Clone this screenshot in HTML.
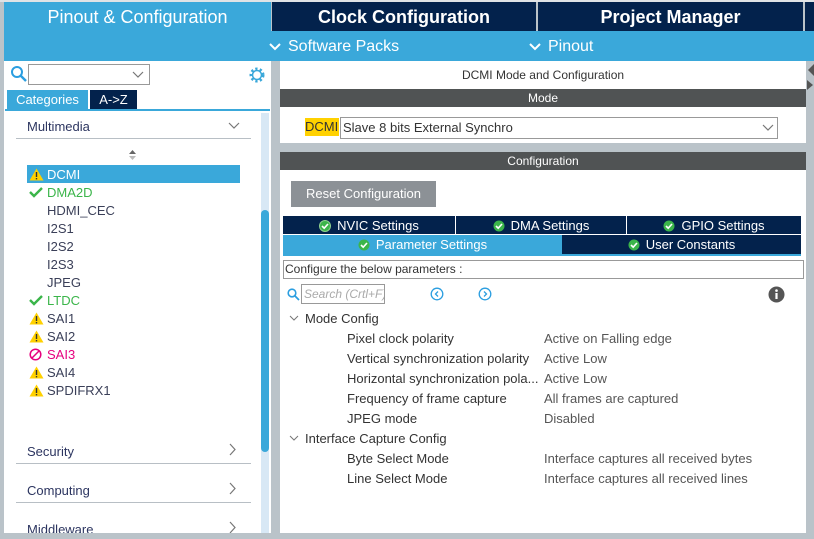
<!DOCTYPE html>
<html><head><meta charset="utf-8"><style>
*{margin:0;padding:0;box-sizing:border-box}
body{width:814px;height:539px;overflow:hidden;background:#bac3c9;font-family:"Liberation Sans",sans-serif;position:relative}
.a{position:absolute}
.t{color:#fff;text-align:center;white-space:nowrap}
.list div{position:absolute;left:47px;font-size:13px;color:#3a3f58}
.ic{position:absolute;left:-18px;top:1px}
.row{position:absolute;font-size:13px;color:#333;white-space:nowrap}
.v{position:absolute;left:544px;font-size:13px;color:#555;white-space:nowrap}
.ck{display:inline-block;vertical-align:-2px;margin-right:6px}
</style></head><body>
<div class="a" style="left:0;top:0;width:814px;height:2px;background:#dfe3e6"></div>
<div class="a t" style="left:4px;top:2px;width:267px;height:29px;background:#3aa8da;font-size:18px;line-height:31px">Pinout &amp; Configuration</div>
<div class="a t" style="left:272px;top:2px;width:264px;height:29px;background:#03224c;font-size:18px;line-height:31px;font-weight:bold">Clock Configuration</div>
<div class="a t" style="left:538px;top:2px;width:265px;height:29px;background:#03224c;font-size:18px;line-height:31px;font-weight:bold">Project Manager</div>
<div class="a" style="left:805px;top:2px;width:9px;height:29px;background:#03224c"></div>
<div class="a" style="left:4px;top:31px;width:810px;height:30px;background:#3aa8da"></div>
<svg class="a" style="left:268px;top:42px" width="14" height="10"><path d="M2 2 L7 7 L12 2" fill="none" stroke="#fff" stroke-width="2"/></svg>
<div class="a" style="left:288px;top:38px;color:#fff;font-size:16px">Software Packs</div>
<svg class="a" style="left:528px;top:42px" width="14" height="10"><path d="M2 2 L7 7 L12 2" fill="none" stroke="#fff" stroke-width="2"/></svg>
<div class="a" style="left:548px;top:38px;color:#fff;font-size:16px">Pinout</div>
<!-- left panel -->
<div class="a" style="left:4px;top:61px;width:267px;height:478px;background:#fff"></div>
<svg class="a" style="left:10px;top:65px" width="18" height="18"><circle cx="7" cy="7" r="5" fill="none" stroke="#2b9ee0" stroke-width="2"/><line x1="11" y1="11" x2="16" y2="16" stroke="#2b9ee0" stroke-width="2.4"/></svg>
<div class="a" style="left:28px;top:64px;width:122px;height:21px;border:1px solid #999;background:#fff"></div>
<svg class="a" style="left:132px;top:71px" width="12" height="8"><path d="M1 1 L6 6 L11 1" fill="none" stroke="#777" stroke-width="1.2"/></svg>
<svg class="a" style="left:248px;top:66px" width="18" height="18" viewBox="0 0 18 18"><circle cx="9" cy="9" r="6" fill="none" stroke="#3aa8da" stroke-width="3" stroke-dasharray="2.2 2.2"/><circle cx="9" cy="9" r="4.5" fill="none" stroke="#3aa8da" stroke-width="1.5"/></svg>
<div class="a t" style="left:7px;top:90px;width:81px;height:19px;background:#3aa8da;font-size:13px;line-height:19px">Categories</div>
<div class="a t" style="left:90px;top:90px;width:47px;height:19px;background:#03224c;font-size:13px;line-height:19px">A-&gt;Z</div>
<div class="a" style="left:5px;top:109px;width:265px;height:2px;background:#3aa8da"></div>
<div class="a" style="left:261px;top:113px;width:8px;height:420px;background:#d8e8f5"></div>
<div class="a" style="left:261px;top:210px;width:8px;height:242px;background:#3aa8da;border-radius:4px"></div>
<div class="a" style="left:27px;top:119px;font-size:13px;color:#2c3560">Multimedia</div>
<svg class="a" style="left:228px;top:122px" width="12" height="8"><path d="M1 1 L6 6 L11 1" fill="none" stroke="#777" stroke-width="1.2"/></svg>
<div class="a" style="left:16px;top:138px;width:235px;height:1px;background:#b8bfc5"></div>
<svg class="a" style="left:128px;top:150px" width="9" height="10"><path d="M1 4 L4.5 0 L8 4Z" fill="#666"/><path d="M1 6 L4.5 10 L8 6Z" fill="#bbb"/></svg>
<div class="a" style="left:27px;top:165px;width:213px;height:18px;background:#3aa8da"></div>
<div class="list">
<div style="top:167px;color:#fff"><svg class="ic" width="15" height="13"><path d="M7.5 0.5 L14.5 12.5 L0.5 12.5Z" fill="#ffd100"/><rect x="6.8" y="4" width="1.4" height="5" fill="#333"/><rect x="6.8" y="10" width="1.4" height="1.4" fill="#333"/></svg>DCMI</div>
<div style="top:185px;color:#3bb54a"><svg class="ic" width="14" height="12"><path d="M1 6 L5 10 L13 2" fill="none" stroke="#3bb54a" stroke-width="2.4"/></svg>DMA2D</div>
<div style="top:203px">HDMI_CEC</div>
<div style="top:221px">I2S1</div>
<div style="top:239px">I2S2</div>
<div style="top:257px">I2S3</div>
<div style="top:275px">JPEG</div>
<div style="top:293px;color:#3bb54a"><svg class="ic" width="14" height="12"><path d="M1 6 L5 10 L13 2" fill="none" stroke="#3bb54a" stroke-width="2.4"/></svg>LTDC</div>
<div style="top:311px"><svg class="ic" width="15" height="13"><path d="M7.5 0.5 L14.5 12.5 L0.5 12.5Z" fill="#ffd100"/><rect x="6.8" y="4" width="1.4" height="5" fill="#333"/><rect x="6.8" y="10" width="1.4" height="1.4" fill="#333"/></svg>SAI1</div>
<div style="top:329px"><svg class="ic" width="15" height="13"><path d="M7.5 0.5 L14.5 12.5 L0.5 12.5Z" fill="#ffd100"/><rect x="6.8" y="4" width="1.4" height="5" fill="#333"/><rect x="6.8" y="10" width="1.4" height="1.4" fill="#333"/></svg>SAI2</div>
<div style="top:347px;color:#e6007e"><svg class="ic" width="14" height="14"><circle cx="6.5" cy="6.5" r="5.3" fill="none" stroke="#e6007e" stroke-width="1.5"/><line x1="3" y1="10" x2="10" y2="3" stroke="#e6007e" stroke-width="1.5"/></svg>SAI3</div>
<div style="top:365px"><svg class="ic" width="15" height="13"><path d="M7.5 0.5 L14.5 12.5 L0.5 12.5Z" fill="#ffd100"/><rect x="6.8" y="4" width="1.4" height="5" fill="#333"/><rect x="6.8" y="10" width="1.4" height="1.4" fill="#333"/></svg>SAI4</div>
<div style="top:383px"><svg class="ic" width="15" height="13"><path d="M7.5 0.5 L14.5 12.5 L0.5 12.5Z" fill="#ffd100"/><rect x="6.8" y="4" width="1.4" height="5" fill="#333"/><rect x="6.8" y="10" width="1.4" height="1.4" fill="#333"/></svg>SPDIFRX1</div>
</div>
<div class="a" style="left:27px;top:444px;font-size:13px;color:#2c3560">Security</div>
<div class="a" style="left:27px;top:483px;font-size:13px;color:#2c3560">Computing</div>
<div class="a" style="left:27px;top:522px;font-size:13px;color:#2c3560">Middleware</div>
<svg class="a" style="left:229px;top:443px" width="8" height="13"><path d="M1 1 L6 6.5 L1 12" fill="none" stroke="#777" stroke-width="1.2"/></svg>
<svg class="a" style="left:229px;top:482px" width="8" height="13"><path d="M1 1 L6 6.5 L1 12" fill="none" stroke="#777" stroke-width="1.2"/></svg>
<svg class="a" style="left:229px;top:521px" width="8" height="13"><path d="M1 1 L6 6.5 L1 12" fill="none" stroke="#777" stroke-width="1.2"/></svg>
<div class="a" style="left:16px;top:463px;width:235px;height:1px;background:#b8bfc5"></div>
<div class="a" style="left:16px;top:502px;width:235px;height:1px;background:#b8bfc5"></div>
<div class="a" style="left:0;top:533px;width:272px;height:6px;background:#bac3c9"></div>
<!-- right panel -->
<div class="a" style="left:280px;top:61px;width:526px;height:472px;background:#fff"></div>
<div class="a" style="left:280px;top:143px;width:526px;height:9px;background:#bac3c9"></div>
<svg class="a" style="left:806px;top:62px" width="8" height="30"><path d="M8 2 L2 8 L8 14Z" fill="#555"/><path d="M1 18 L7 23 L1 28Z" fill="#555"/></svg>
<div class="a" style="left:280px;top:68px;width:526px;text-align:center;font-size:12px;color:#333">DCMI Mode and Configuration</div>
<div class="a t" style="left:280px;top:89px;width:526px;height:18px;background:#505354;font-size:12px;line-height:18px">Mode</div>
<div class="a" style="left:305px;top:118px;width:34px;height:18px;background:#ffd100;font-size:13px;line-height:18px;color:#333">DCMI</div>
<div class="a" style="left:340px;top:117px;width:438px;height:22px;border:1px solid #999;font-size:13px;line-height:20px;padding-left:2px;color:#333">Slave 8 bits External Synchro</div>
<svg class="a" style="left:762px;top:124px" width="12" height="8"><path d="M1 1 L6 6 L11 1" fill="none" stroke="#777" stroke-width="1.2"/></svg>
<div class="a t" style="left:280px;top:152px;width:526px;height:18px;background:#505354;font-size:12px;line-height:18px">Configuration</div>
<div class="a t" style="left:291px;top:181px;width:145px;height:26px;background:#8c9196;font-size:13px;line-height:26px">Reset Configuration</div>
<div class="a" style="left:283px;top:216px;width:518px;height:40px;background:#03224c"></div>
<div class="a" style="left:455px;top:216px;width:1px;height:18px;background:#fff"></div>
<div class="a" style="left:626px;top:216px;width:1px;height:18px;background:#fff"></div>
<div class="a" style="left:283px;top:234px;width:518px;height:1px;background:#fff"></div>
<div class="a" style="left:283px;top:235px;width:279px;height:20px;background:#3aa8da"></div>
<div class="a" style="left:283px;top:254px;width:518px;height:2px;background:#3aa8da"></div>
<div class="a t" style="left:283px;top:216px;width:172px;height:18px;font-size:13px;line-height:19px"><svg class="ck" width="12" height="12"><circle cx="6" cy="6" r="6" fill="#8fd18f"/><circle cx="6" cy="6" r="5" fill="#3bb54a"/><path d="M3 6 L5.2 8.2 L9 4" fill="none" stroke="#fff" stroke-width="1.6"/></svg>NVIC Settings</div>
<div class="a t" style="left:456px;top:216px;width:170px;height:18px;font-size:13px;line-height:19px"><svg class="ck" width="12" height="12"><circle cx="6" cy="6" r="5.5" fill="#3bb54a"/><path d="M3 6 L5.2 8.2 L9 4" fill="none" stroke="#fff" stroke-width="1.6"/></svg>DMA Settings</div>
<div class="a t" style="left:627px;top:216px;width:174px;height:18px;font-size:13px;line-height:19px"><svg class="ck" width="12" height="12"><circle cx="6" cy="6" r="5.5" fill="#3bb54a"/><path d="M3 6 L5.2 8.2 L9 4" fill="none" stroke="#fff" stroke-width="1.6"/></svg>GPIO Settings</div>
<div class="a t" style="left:283px;top:235px;width:279px;height:19px;font-size:13px;line-height:19px"><svg class="ck" width="12" height="12"><circle cx="6" cy="6" r="5.5" fill="#3bb54a"/><path d="M3 6 L5.2 8.2 L9 4" fill="none" stroke="#fff" stroke-width="1.6"/></svg>Parameter Settings</div>
<div class="a t" style="left:562px;top:235px;width:239px;height:19px;font-size:13px;line-height:19px"><svg class="ck" width="12" height="12"><circle cx="6" cy="6" r="5.5" fill="#3bb54a"/><path d="M3 6 L5.2 8.2 L9 4" fill="none" stroke="#fff" stroke-width="1.6"/></svg>User Constants</div>
<div class="a" style="left:283px;top:260px;width:521px;height:19px;border:1px solid #999;font-size:12px;line-height:17px;color:#333;padding-left:1px">Configure the below parameters :</div>
<svg class="a" style="left:287px;top:288px" width="13" height="13"><circle cx="5" cy="5" r="3.8" fill="none" stroke="#2b9ee0" stroke-width="1.6"/><line x1="8" y1="8" x2="12" y2="12" stroke="#2b9ee0" stroke-width="1.8"/></svg>
<div class="a" style="left:301px;top:284px;width:84px;height:20px;border:1px solid #999;font-size:12px;line-height:18px;color:#aaa;font-style:italic;padding-left:2px;white-space:nowrap;overflow:hidden">Search (Crtl+F)</div>
<svg class="a" style="left:430px;top:287px" width="14" height="14"><circle cx="7" cy="7" r="5.8" fill="none" stroke="#2b9ee0" stroke-width="1.3"/><path d="M8 4.5 L5.5 7 L8 9.5" fill="none" stroke="#2b9ee0" stroke-width="1.3"/></svg>
<svg class="a" style="left:478px;top:287px" width="14" height="14"><circle cx="7" cy="7" r="5.8" fill="none" stroke="#2b9ee0" stroke-width="1.3"/><path d="M6 4.5 L8.5 7 L6 9.5" fill="none" stroke="#2b9ee0" stroke-width="1.3"/></svg>
<svg class="a" style="left:768px;top:286px" width="17" height="17"><circle cx="8.5" cy="8.5" r="8" fill="#555"/><rect x="7.4" y="7" width="2.2" height="6" fill="#fff"/><circle cx="8.5" cy="4.6" r="1.3" fill="#fff"/></svg>
<svg class="a" style="left:289px;top:315px" width="10" height="7"><path d="M1 1 L5 5 L9 1" fill="none" stroke="#777" stroke-width="1"/></svg>
<svg class="a" style="left:289px;top:435px" width="10" height="7"><path d="M1 1 L5 5 L9 1" fill="none" stroke="#777" stroke-width="1"/></svg>
<div class="row" style="left:305px;top:311px">Mode Config</div>
<div class="row" style="left:347px;top:331px">Pixel clock polarity</div><div class="v" style="top:331px">Active on Falling edge</div>
<div class="row" style="left:347px;top:351px">Vertical synchronization polarity</div><div class="v" style="top:351px">Active Low</div>
<div class="row" style="left:347px;top:371px">Horizontal synchronization pola...</div><div class="v" style="top:371px">Active Low</div>
<div class="row" style="left:347px;top:391px">Frequency of frame capture</div><div class="v" style="top:391px">All frames are captured</div>
<div class="row" style="left:347px;top:411px">JPEG mode</div><div class="v" style="top:411px">Disabled</div>
<div class="row" style="left:305px;top:431px">Interface Capture Config</div>
<div class="row" style="left:347px;top:451px">Byte Select Mode</div><div class="v" style="top:451px">Interface captures all received bytes</div>
<div class="row" style="left:347px;top:471px">Line Select Mode</div><div class="v" style="top:471px">Interface captures all received lines</div>
</body></html>
